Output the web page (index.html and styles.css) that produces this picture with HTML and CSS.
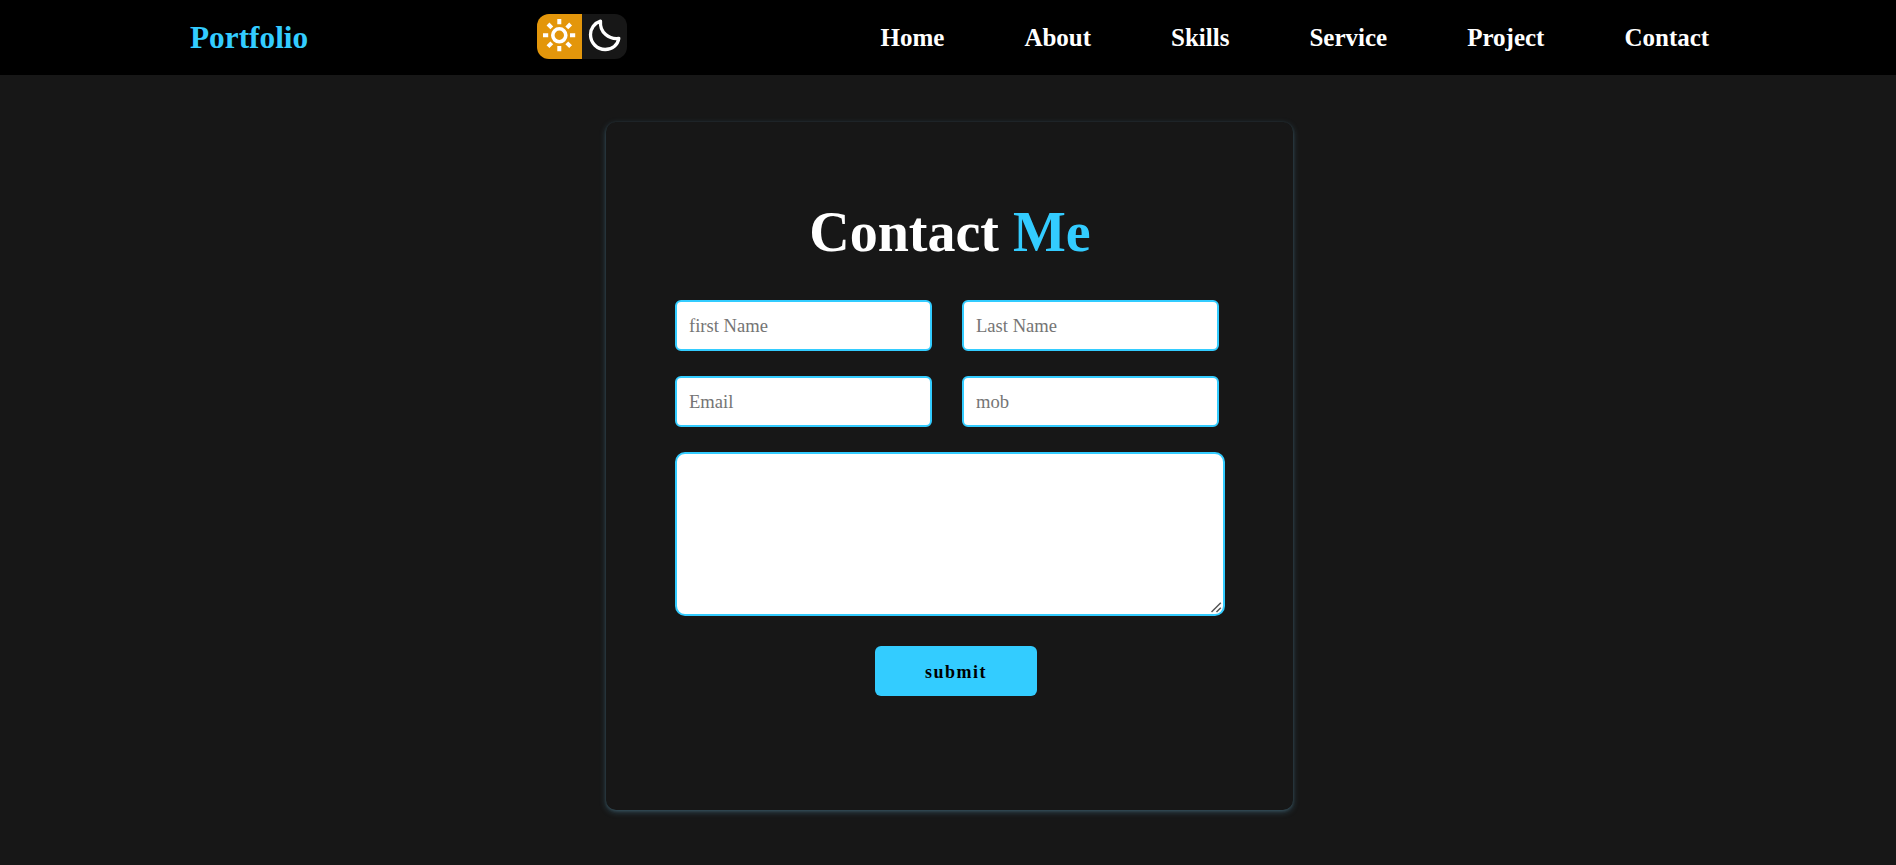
FILE: index.html
```html
<!DOCTYPE html>
<html lang="en">
<head>
<meta charset="utf-8">
<title>Portfolio</title>
<link rel="stylesheet" href="styles.css">
</head>
<body>
<header class="navbar">
  <a class="logo">Portfolio</a>
  <div class="theme">
    <span class="theme-light">
      <svg class="icon" viewBox="0 0 45 45" fill="none" stroke="#fff"><circle cx="22.3" cy="21.3" r="6.5" stroke-width="3.600"/><path stroke-width="4" d="M22.300 5v5.200M22.300 32v5.200M6 21.300h5.200M33 21.300h5.200M11 10l3.800 3.800M29.800 28.800L33.600 32.600M33.600 10l-3.800 3.800M14.800 28.800L11 32.600"/></svg>
    </span>
    <span class="theme-dark">
      <svg class="icon" viewBox="0 0 45 45" fill="none" stroke="#fff" stroke-width="3.300" stroke-linejoin="round"><path d="M18.500 7.100C12.500 9 8.500 14.500 8.500 20.600C8.500 29.200 15.200 35.500 23.200 35.500C30.100 35.500 35.800 31 36.800 24.500C27.200 25.700 17.500 18.700 18.500 7.100Z"/></svg>
    </span>
  </div>
  <nav class="links">
    <a>Home</a><a>About</a><a>Skills</a><a>Service</a><a>Project</a><a>Contact</a>
  </nav>
</header>
<main class="contact">
  <form class="card">
    <h1 class="title">Contact <span class="accent">Me</span></h1>
    <div class="fields">
      <input class="field" placeholder="first Name">
      <input class="field" placeholder="Last Name">
      <input class="field" placeholder="Email">
      <input class="field" placeholder="mob">
    </div>
    <div class="message-box">
      <textarea class="message"></textarea>
      <svg class="grip" viewBox="0 0 11 11" fill="none" stroke="#555" stroke-width="1.500"><path d="M.5 10L9.800 .7M5.500 10L9.800 5.700"/></svg>
    </div>
    <button class="submit" type="button">submit</button>
  </form>
</main>
</body>
</html>
```
FILE: styles.css
```css
* { margin: 0; padding: 0; box-sizing: border-box; }
body {
  min-height: 865px;
  background: #171717;
  color: #fff;
  font-family: "Liberation Serif", "Times New Roman", serif;
}
.navbar {
  display: flex;
  align-items: center;
  height: 75px;
  padding-left: 190px;
  background: #000;
}
.logo { width: 347px; font-size: 31.3px; font-weight: 700; color: #3cf; }
.theme {
  display: flex;
  width: 90px;
  height: 45px;
  margin-bottom: 2px;
  border-radius: 12px;
  overflow: hidden;
}
.theme-light, .theme-dark { width: 45px; height: 45px; }
.theme-light { background: #e3960b; }
.theme-dark { background: #171717; }
.icon { display: block; width: 45px; height: 45px; }
.links { display: flex; gap: 80px; margin-left: 253.5px; font-size: 25px; font-weight: 700; }
.contact { padding: 47px 0 0 606px; }
.card {
  width: 687px;
  height: 688px;
  padding: 78px 68px 0 69px;
  border-radius: 10px;
  box-shadow: 0 1px 3px rgba(110, 160, 180, .22), 0 2px 6px rgba(85, 155, 185, .36);
}
.title { height: 100px; line-height: 64px; font-size: 56px; text-align: center; }
.accent { color: #3cf; }
.fields { display: grid; grid-template-columns: 257px 257px; gap: 25px 30px; }
.field {
  width: 257px;
  height: 51px;
  padding: 1px 12px 0;
  border: 2px solid #3cf;
  border-radius: 6px;
  background: #fff;
  font-family: inherit;
  font-size: 18.6px;
}
.field::placeholder { color: #757575; }
.message-box { position: relative; width: 550px; margin-top: 25px; }
.message {
  display: block;
  width: 550px;
  height: 164px;
  border: 2px solid #3cf;
  border-radius: 10px;
  background: #fff;
  resize: none;
}
.grip { position: absolute; right: 3px; bottom: 3px; width: 11px; height: 11px; }
.submit {
  display: block;
  width: 162px;
  height: 50px;
  margin: 30px 0 0 200px;
  padding-top: 2px;
  border: 0;
  border-radius: 6px;
  background: #3cf;
  color: #000;
  font-family: inherit;
  font-size: 18px;
  font-weight: 700;
  letter-spacing: 1.5px;
}
```
